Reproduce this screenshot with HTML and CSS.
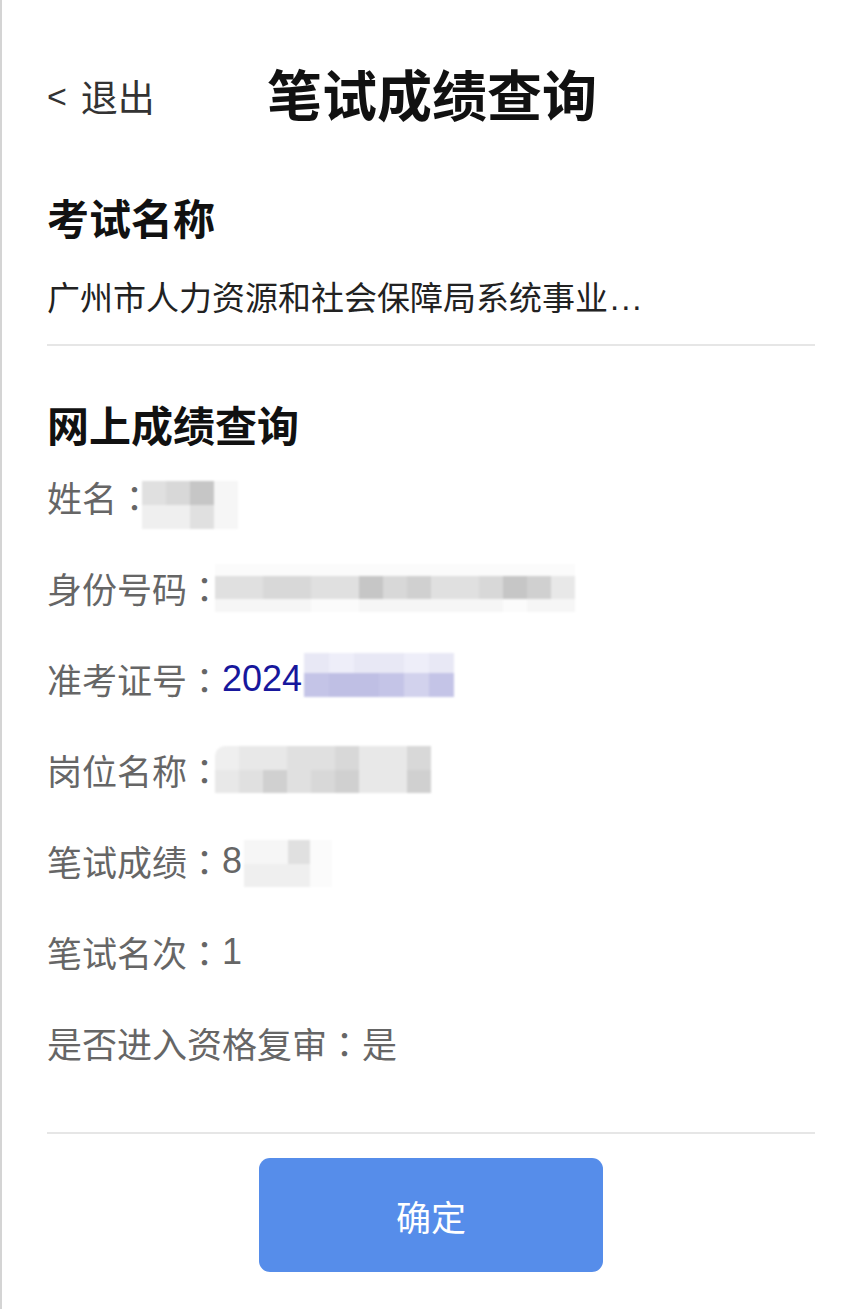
FILE: index.html
```html
<!DOCTYPE html>
<html lang="zh-CN">
<head>
<meta charset="utf-8">
<title>笔试成绩查询</title>
<link rel="stylesheet" href="styles.css">
</head>
<body>
<div class="page">
  <header class="topbar">
    <a class="back"><span class="chev">&lt;</span>退出</a>
    <h1 class="title">笔试成绩查询</h1>
  </header>

  <section class="exam">
    <h2 class="sec-title">考试名称</h2>
    <p class="exam-name">广州市人力资源和社会保障局系统事业<span class="dots">...</span></p>
  </section>

  <hr class="divider">

  <section class="result">
    <h2 class="sec-title result-title">网上成绩查询</h2>
    <ul class="fields">
      <li class="field">
        <span class="label">姓名</span><span class="colon">：</span>
        <span class="mosaic m-name">
          <span class="mrow"><i class="s3"></i><i class="s4"></i><i class="s6"></i><i class="s0"></i></span>
          <span class="mrow"><i class="s1"></i><i class="s1"></i><i class="s3"></i><i class="s0"></i></span>
        </span>
      </li>
      <li class="field">
        <span class="label">身份号码</span><span class="colon">：</span>
        <span class="mosaic m-id">
          <span class="mrow faint"><i class="w"></i><i class="w"></i><i class="w"></i><i class="w"></i><i class="w"></i><i class="w"></i><i class="w"></i><i class="w"></i><i class="w"></i><i class="w"></i><i class="w"></i><i class="w"></i><i class="w"></i><i class="w"></i><i class="w"></i></span>
          <span class="mrow mid"><i class="s3"></i><i class="s3"></i><i class="s4"></i><i class="s4"></i><i class="s3"></i><i class="s3"></i><i class="s6"></i><i class="s4"></i><i class="s5"></i><i class="s3"></i><i class="s3"></i><i class="s4"></i><i class="s6"></i><i class="s5"></i><i class="s2"></i></span>
          <span class="mrow faint2"><i class="s0"></i><i class="s0"></i><i class="s0"></i><i class="s0"></i><i class="w"></i><i class="w"></i><i class="s0"></i><i class="s0"></i><i class="s0"></i><i class="s0"></i><i class="s0"></i><i class="s0"></i><i class="w"></i><i class="s0"></i><i class="s0"></i></span>
        </span>
      </li>
      <li class="field">
        <span class="label">准考证号</span><span class="colon">：</span>
        <span class="value num">2024</span>
        <span class="mosaic m-ticket">
          <span class="mrow r1"><i class="l1"></i><i class="l2"></i><i class="l1"></i><i class="l1"></i><i class="l2"></i><i class="l1"></i></span>
          <span class="mrow r2"><i class="l3"></i><i class="l4"></i><i class="l4"></i><i class="l3"></i><i class="l5"></i><i class="l3"></i></span>
        </span>
      </li>
      <li class="field">
        <span class="label">岗位名称</span><span class="colon">：</span>
        <span class="mosaic m-post">
          <span class="mrow"><i class="s1"></i><i class="s2"></i><i class="s2"></i><i class="s3"></i><i class="s3"></i><i class="s4"></i><i class="s2"></i><i class="s2"></i><i class="s4"></i></span>
          <span class="mrow"><i class="s2"></i><i class="s3"></i><i class="s5"></i><i class="s3"></i><i class="s4"></i><i class="s5"></i><i class="s2"></i><i class="s2"></i><i class="s5"></i></span>
        </span>
      </li>
      <li class="field">
        <span class="label">笔试成绩</span><span class="colon">：</span>
        <span class="value num-gray">8</span>
        <span class="mosaic m-score">
          <span class="mrow"><i class="s0"></i><i class="s0"></i><i class="s3"></i><i class="w"></i></span>
          <span class="mrow"><i class="s1"></i><i class="s1"></i><i class="s1"></i><i class="w"></i></span>
        </span>
      </li>
      <li class="field">
        <span class="label">笔试名次</span><span class="colon">：</span>
        <span class="value num-gray">1</span>
      </li>
      <li class="field">
        <span class="label">是否进入资格复审</span><span class="colon">：</span>
        <span class="value">是</span>
      </li>
    </ul>
  </section>

  <hr class="divider divider-bottom">

  <div class="actions">
    <button class="btn-primary" type="button">确定</button>
  </div>
</div>
</body>
</html>
```

FILE: styles.css
```css
* {
  box-sizing: border-box;
}

html, body {
  margin: 0;
  padding: 0;
  background: #ffffff;
}

body {
  font-family: "Noto Sans CJK SC", "Noto Sans", sans-serif;
  color: #222222;
}

.page {
  width: 853px;
  min-height: 1309px;
  border-left: 2px solid #d4d4d4;
  padding: 60px 38px 0 45px;
}

/* Top bar */
.topbar {
  display: flex;
  align-items: center;
  height: 72px;
}

.back {
  display: flex;
  align-items: center;
  width: 220px;
  flex: 0 0 220px;
  font-size: 37px;
  line-height: 72px;
  color: #333333;
  text-decoration: none;
}

.chev {
  font-family: "Liberation Sans", sans-serif;
  font-size: 34px;
  margin-right: 14px;
}

.title {
  margin: -8px 0 0;
  font-size: 55px;
  line-height: 72px;
  font-weight: 700;
  color: #111111;
}

/* Section titles */
.sec-title {
  margin: 55px 0 0;
  font-size: 42px;
  line-height: 60px;
  font-weight: 700;
  color: #111111;
}

.exam-name {
  margin: 24px 0 0;
  height: 50px;
  font-size: 33px;
  line-height: 50px;
  color: #222222;
  white-space: nowrap;
}

.dots {
  font-family: "Liberation Sans", sans-serif;
  line-height: 1;
  letter-spacing: 2px;
  margin-left: 2px;
}

.divider {
  margin: 23px 0 0;
  height: 2px;
  border: 0;
  background: #e6e6e6;
}

.result-title {
  margin-top: 51px;
  line-height: 54px;
}

/* Fields */
.fields {
  list-style: none;
  margin: 0;
  padding: 0;
}

.field {
  display: flex;
  align-items: center;
  height: 91px;
  font-size: 35px;
  color: #666666;
}

.label,
.colon,
.value {
  line-height: 50px;
}

.colon {
  display: inline-block;
  width: 35px;
  text-align: center;
  font-family: "Noto Sans CJK TC", "Noto Sans CJK SC", sans-serif;
}

.value {
  color: #666666;
}

.value.num,
.value.num-gray {
  font-family: "Liberation Sans", "Noto Sans", sans-serif;
  font-size: 36px;
}

.value.num {
  color: #17179c;
}

/* Mosaic (pixelated private info) */
.mosaic {
  display: inline-flex;
  flex-direction: column;
  filter: blur(0.8px);
}

.mrow {
  display: flex;
}

.mrow i {
  display: block;
  width: 24px;
  height: 24px;
}

.m-name {
  margin-left: -10px;
  margin-top: 16px;
}

.m-id {
  margin-left: -7px;
}

.m-id .faint i { height: 12px; }
.m-id .mid i { height: 23px; }
.m-id .faint2 i { height: 13px; }

.m-ticket {
  margin-left: 2px;
  margin-top: -8px;
}

.m-ticket .mrow i { width: 25px; }
.m-ticket .r1 i { height: 20px; }
.m-ticket .r2 i { height: 24px; }

.m-post {
  margin-left: -7px;
}

.m-post .mrow i {
  width: 24px;
  height: 23.5px;
}

.m-post .mrow:first-child i:first-child {
  border-top-left-radius: 10px;
}

.m-score {
  margin-left: 2px;
  margin-top: 6px;
}

.m-score .mrow i {
  width: 22px;
  height: 23.5px;
}

.w  { background: #fbfbfb; }
.s0 { background: #f6f6f6; }
.s1 { background: #efefef; }
.s2 { background: #e8e8e8; }
.s3 { background: #e0e0e0; }
.s4 { background: #d8d8d8; }
.s5 { background: #d0d0d0; }
.s6 { background: #c6c6c6; }

.l1 { background: #e8e8f5; }
.l2 { background: #eeeef9; }
.l3 { background: #c4c4e7; }
.l4 { background: #bfbfe4; }
.l5 { background: #d2d2ed; }

/* Bottom */
.divider-bottom {
  margin-top: 44px;
}

.actions {
  display: flex;
  justify-content: center;
  margin-top: 24px;
}

.btn-primary {
  width: 344px;
  height: 114px;
  border: 0;
  border-radius: 11px;
  background: #568dea;
  color: #ffffff;
  font-family: "Noto Sans CJK SC", sans-serif;
  font-size: 35px;
  cursor: pointer;
}
```
